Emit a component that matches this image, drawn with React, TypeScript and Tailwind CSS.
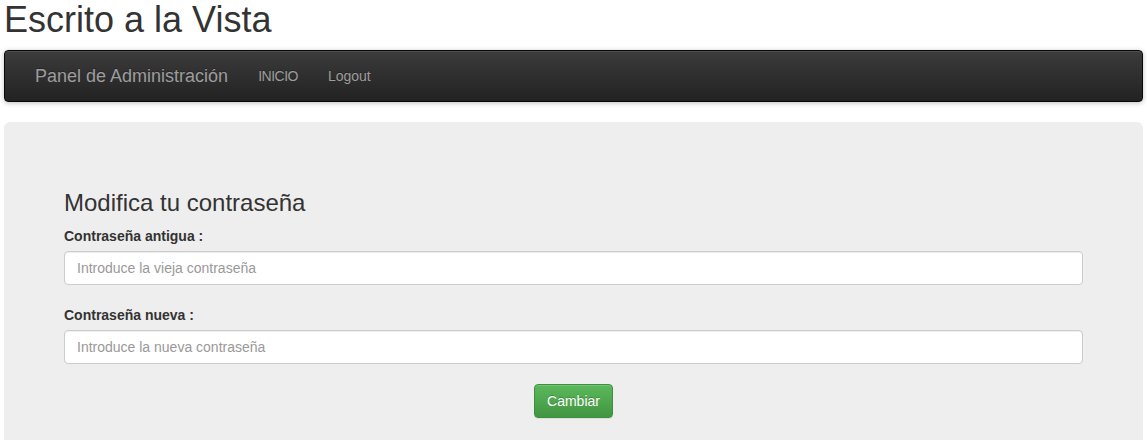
export default function App() {
  return (
    <div className="px-1 font-['Liberation_Sans',Arial,sans-serif] text-[14px] leading-[20px] text-[#333]">
      <h1 className="text-[36px] leading-[1.1] font-normal mb-[10px]">Escrito a la Vista</h1>

      <nav className="h-[52px] mb-5 rounded border border-[#080808] bg-linear-to-b from-[#3c3c3c] to-[#222] px-[15px] flex items-stretch shadow-[inset_0_1px_0_rgba(255,255,255,0.1),0_1px_5px_rgba(0,0,0,0.25)]">
        <a className="px-[15px] flex items-center text-[18px] leading-[20px] text-[#9d9d9d] [text-shadow:0_-1px_0_rgba(0,0,0,0.25)]">
          Panel de Administración
        </a>
        <a className="px-[15px] flex items-center text-[#9d9d9d] tracking-[-0.5px] [text-shadow:0_-1px_0_rgba(0,0,0,0.25)]">INICIO</a>
        <a className="px-[15px] flex items-center text-[#9d9d9d] [text-shadow:0_-1px_0_rgba(0,0,0,0.25)]">Logout</a>
      </nav>

      <div className="bg-[#eee] rounded-md px-[60px] py-[48px]">
        <h3 className="mt-5 mb-[10px] text-[24px] leading-[1.1] font-normal">Modifica tu contraseña</h3>

        <div className="mb-5">
          <label className="block font-bold mb-[5px]">Contraseña antigua :</label>
          <input
            type="password"
            placeholder="Introduce la vieja contraseña"
            className="block w-full h-[34px] px-3 py-1.5 bg-white border border-[#ccc] rounded shadow-[inset_0_1px_1px_rgba(0,0,0,0.075)] placeholder:text-[#999] outline-none"
          />
        </div>

        <div className="mb-5">
          <label className="block font-bold mb-[5px]">Contraseña nueva :</label>
          <input
            type="password"
            placeholder="Introduce la nueva contraseña"
            className="block w-full h-[34px] px-3 py-1.5 bg-white border border-[#ccc] rounded shadow-[inset_0_1px_1px_rgba(0,0,0,0.075)] placeholder:text-[#999] outline-none"
          />
        </div>

        <div className="flex justify-center">
          <button className="h-[34px] px-3 text-white rounded border border-[#3e8f3e] bg-linear-to-b from-[#5cb85c] to-[#419641] [text-shadow:0_-1px_0_rgba(0,0,0,0.2)] shadow-[inset_0_1px_0_rgba(255,255,255,0.15),0_1px_1px_rgba(0,0,0,0.075)]">
            Cambiar
          </button>
        </div>
      </div>
    </div>
  );
}
